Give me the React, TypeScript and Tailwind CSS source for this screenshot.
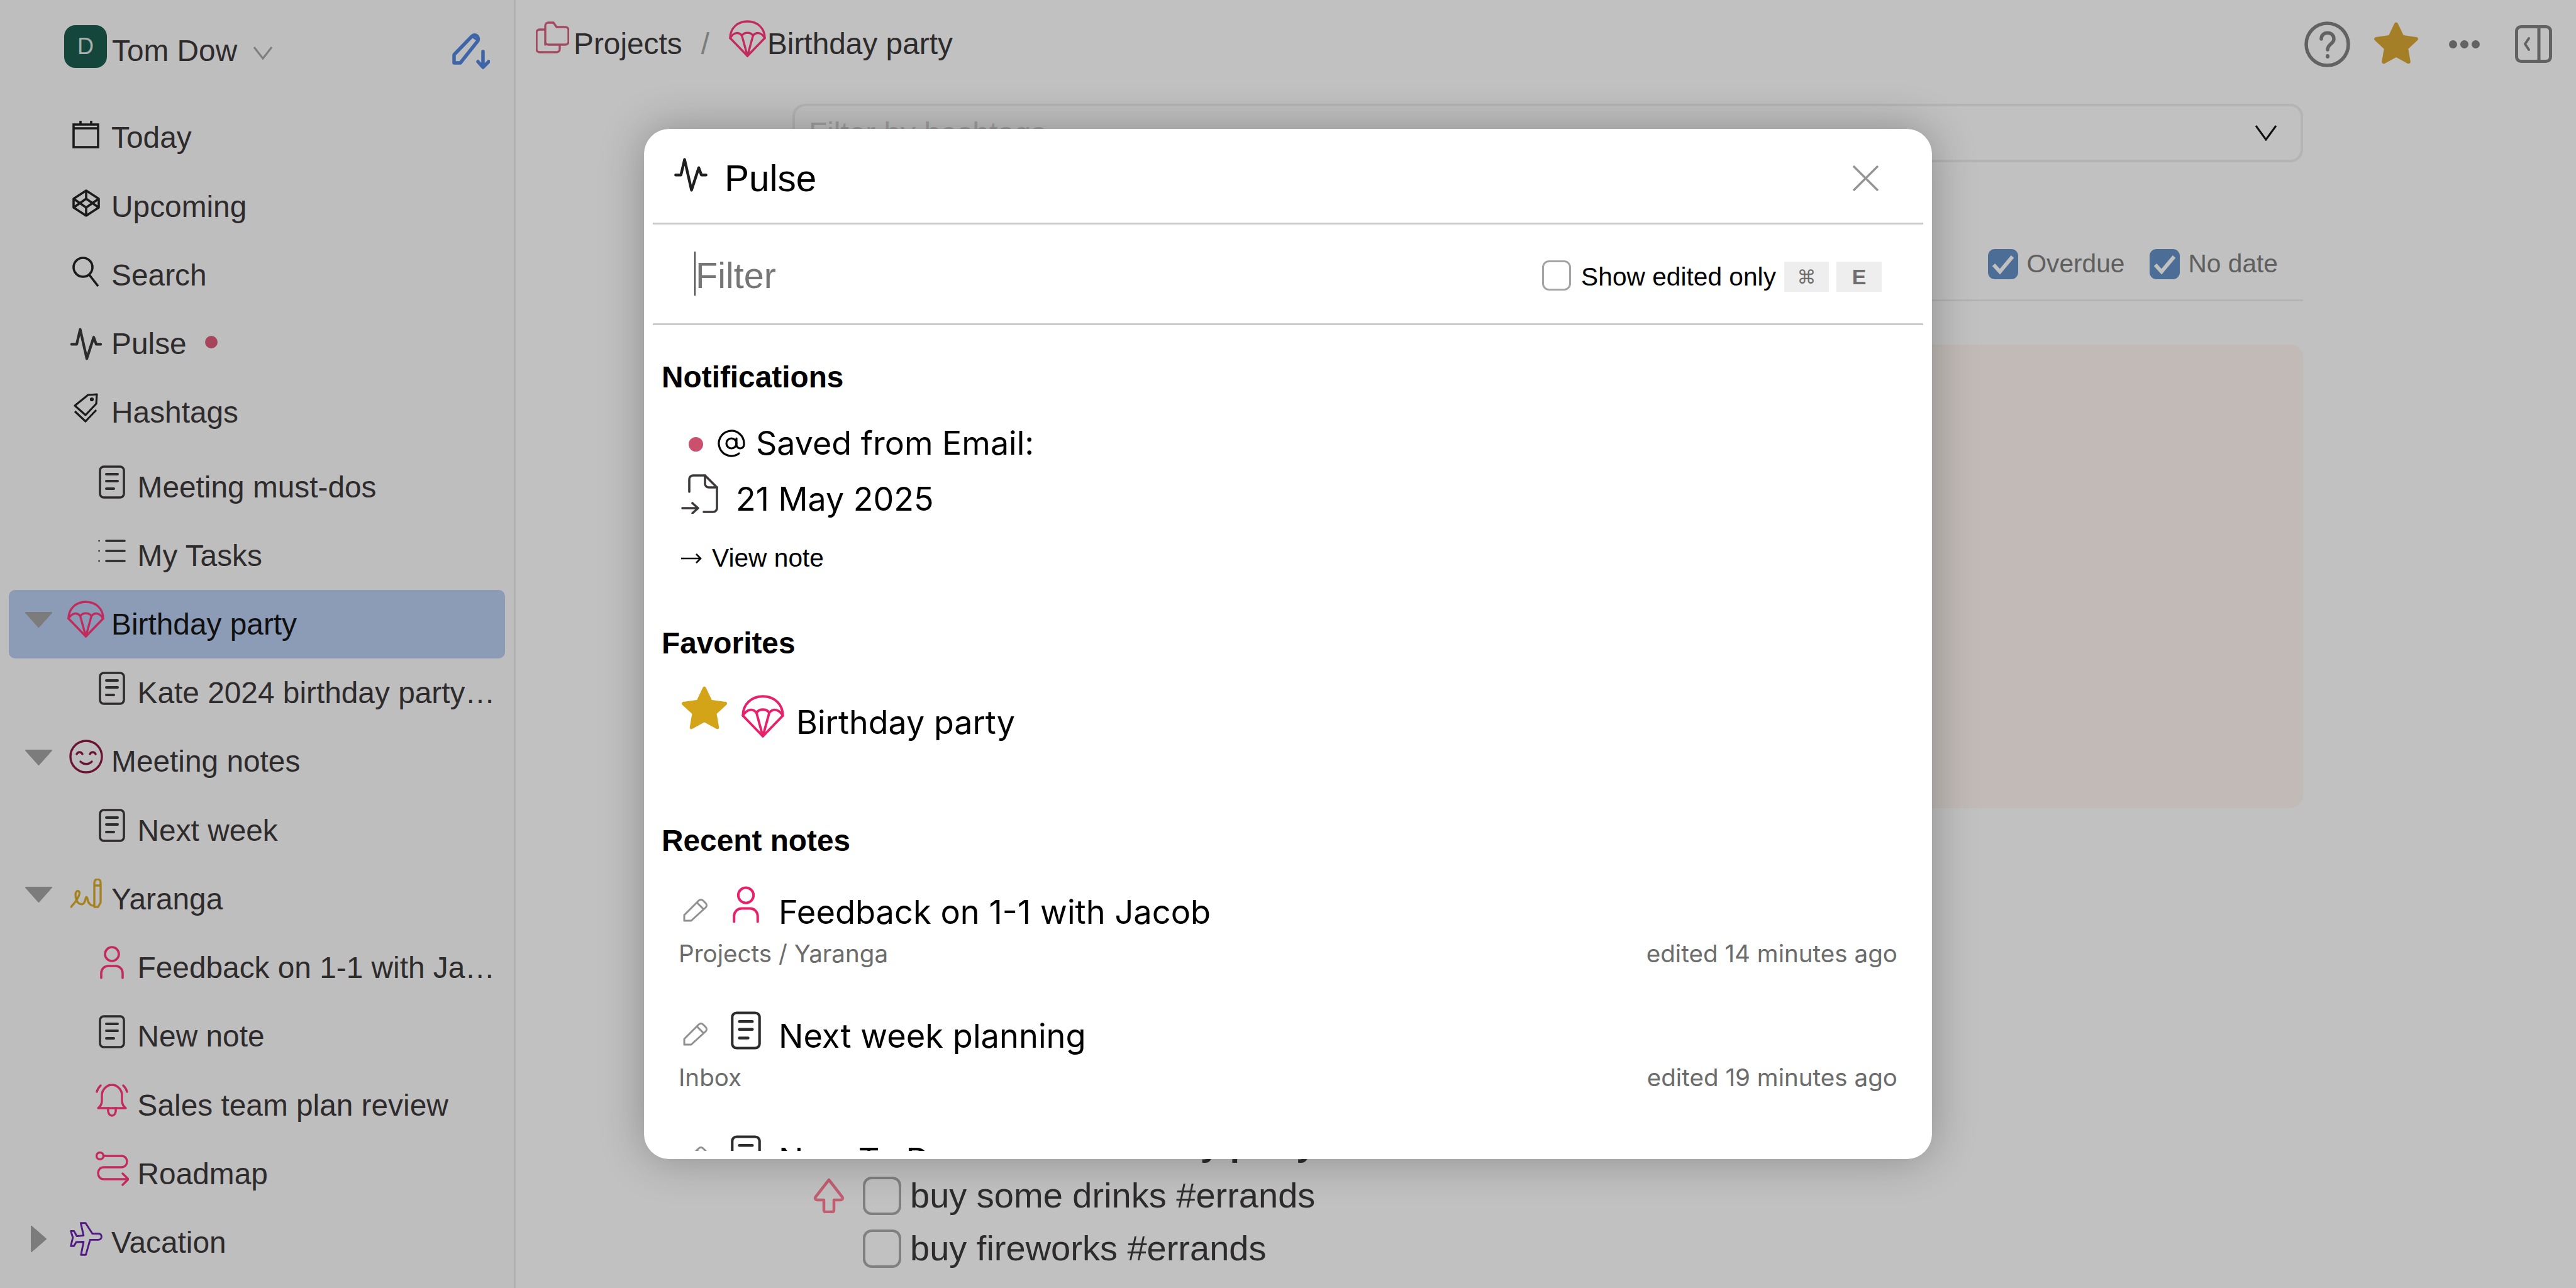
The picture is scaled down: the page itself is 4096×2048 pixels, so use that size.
import { AtSign, Codepen } from "lucide-react";
import type { ReactNode } from "react";

function DocIcon({ className = "" }: { className?: string }) {
  return (
    <svg viewBox="0 0 42 53" className={className} fill="none" stroke="currentColor" strokeWidth="3.6" strokeLinecap="round">
      <rect x="2" y="2" width="38" height="49" rx="6" />
      <path d="M12 14h18M12 25h18M12 37h12" strokeWidth="4" />
    </svg>
  );
}

function Parachute({ className = "" }: { className?: string }) {
  return (
    <svg viewBox="0 0 60 60" className={className} fill="none" stroke="currentColor" strokeWidth="3.4" strokeLinejoin="round" strokeLinecap="round">
      <path d="M2 29C2 13 14 2 30 2s28 11 28 27L30 58Z" />
      <path d="M2 29c6-10 14-10 19-4 4-6 14-6 18 0 5-6 13-6 19 4" />
      <path d="M21 25l9 33 9-33" />
    </svg>
  );
}

function PersonIcon({ className = "" }: { className?: string }) {
  return (
    <svg viewBox="0 0 38 53" className={className} fill="none" stroke="currentColor" strokeWidth="3.6" strokeLinecap="round">
      <circle cx="19" cy="13" r="11" />
      <path d="M2 51v-8a11 11 0 0 1 11-11h12a11 11 0 0 1 11 11v8" />
    </svg>
  );
}

function SmileIcon({ className = "" }: { className?: string }) {
  return (
    <svg viewBox="0 0 54 54" className={className} fill="none" stroke="currentColor" strokeWidth="3.4" strokeLinecap="round">
      <circle cx="27" cy="27" r="25" />
      <path d="M12 23c2-4 7-4 9 0M33 23c2-4 7-4 9 0M18 35c5 5 13 5 18 0" />
    </svg>
  );
}

function SignatureIcon({ className = "" }: { className?: string }) {
  return (
    <svg viewBox="0 0 50 47" className={className} fill="none" stroke="currentColor" strokeWidth="3.4" strokeLinecap="round" strokeLinejoin="round">
      <path d="M38 41V6a5 5 0 0 1 10 0v32l-4 7h-6M38 11h10" />
      <path d="M1 45c8-8 15-20 13-24-3-4-8 1-5 11 2 9 11 12 14 4 1-4 2-10 4-4 1 8 6 12 11 11" />
    </svg>
  );
}

function BellIcon({ className = "" }: { className?: string }) {
  return (
    <svg viewBox="0 0 52 53" className={className} fill="none" stroke="currentColor" strokeWidth="3.4" strokeLinecap="round" strokeLinejoin="round">
      <path d="M4 39c4-3 6-6 6-12V19C10 9 18 2 26 2s16 7 16 17v8c0 6 2 9 6 12Z" />
      <path d="M20 39c-2 16 14 16 12 0" />
      <path d="M2 13c1-4 3-7 6-10M50 13c-1-4-3-7-6-10" />
    </svg>
  );
}

function RouteIcon({ className = "" }: { className?: string }) {
  return (
    <svg viewBox="0 0 53 55" className={className} fill="none" stroke="currentColor" strokeWidth="3.4" strokeLinecap="round" strokeLinejoin="round">
      <circle cx="7" cy="7" r="5.5" />
      <path d="M13 7h28c12 0 12 18 0 18H13c-12 0-12 19 0 19h38" />
      <path d="M43 35l9 9-9 9" />
    </svg>
  );
}

function PlaneIcon({ className = "" }: { className?: string }) {
  return (
    <svg viewBox="0 0 112 120" className={className} fill="none" stroke="currentColor" strokeWidth="6.5" strokeLinejoin="round">
      <path d="M38 4h17l24 37h21c15 0 15 22 0 22H71l-15 53H39l9-46-26 1-8 14H3l7-30L3 32h11l10 18 24-2Z" />
    </svg>
  );
}

function PulseIcon({ className = "" }: { className?: string }) {
  return (
    <svg viewBox="0 0 100 103" className={className} fill="none" stroke="currentColor" strokeWidth="8.5" strokeLinecap="round" strokeLinejoin="round">
      <path d="M4 52h16L31 5l21 93 22-68 8 22h14" />
    </svg>
  );
}

function Triangle({ open }: { open: boolean }) {
  if (open) {
    return (
      <svg viewBox="0 0 43 25" className="mb-[14px] h-[25px] w-[43px]" fill="#a4a4a4" stroke="#a4a4a4" strokeWidth="2" strokeLinejoin="round">
        <path d="M1 1h41L21.5 24Z" />
      </svg>
    );
  }
  return (
    <svg viewBox="0 0 25 42" className="mb-[12px] ml-[9px] h-[42px] w-[25px]" fill="#a4a4a4" stroke="#a4a4a4" strokeWidth="2" strokeLinejoin="round">
      <path d="M1 1v40l23-20Z" />
    </svg>
  );
}

type RowProps = {
  icon: ReactNode;
  label: string;
  child?: boolean;
  open?: boolean;
  selected?: boolean;
  extra?: ReactNode;
};

function Row({ icon, label, child, open, selected, extra }: RowProps) {
  return (
    <div className={`mx-[13.6px] flex h-[109.23px] items-center rounded-[10px] ${selected ? "bg-[#b9cdf1] text-[#161616]" : "text-[#3d393b]"}`}>
      <div className="flex w-[93px] shrink-0 pl-[26px]">{open !== undefined && <Triangle open={open} />}</div>
      {child && <div className="w-[41.5px] shrink-0" />}
      <div className="flex w-[60px] shrink-0 justify-center">{icon}</div>
      <span className="ml-[10.5px] min-w-0 truncate pr-[12px]">{label}</span>
      {extra}
    </div>
  );
}

function Sidebar() {
  const doc = <DocIcon className="mb-[16px] h-[53px] w-[42px] text-[#3d393b]" />;
  return (
    <aside className="flex h-full w-[820px] shrink-0 flex-col border-r-[3px] border-[#ececec] bg-[#fbfbfb] text-[47.8px]">
      <div className="mt-[26px] flex h-[110px] items-center pl-[102px] pr-[38px]">
        <div className="mb-[14px] flex h-[68px] w-[68px] shrink-0 items-center justify-center rounded-[18px] bg-[#1c5d4f] text-[36px] text-[#dfe8e5]">D</div>
        <span className="ml-[8px] text-[#3d393b]">Tom Dow</span>
        <svg viewBox="0 0 30 21" className="ml-[26px] mt-[6px] h-[21px] w-[30px]" fill="none" stroke="#a6a6a6" strokeWidth="3">
          <path d="M1 1l14 18L29 1" />
        </svg>
        <svg viewBox="0 0 60 58" className="ml-auto h-[58px] w-[60px]" fill="none" stroke="#5486e0" strokeWidth="5.5" strokeLinecap="round" strokeLinejoin="round">
          <path d="M3 48V35L31 6c5-6 14 1 9 8L13 48Z" />
          <path d="M32 6l10 7" strokeWidth="3.5" />
          <path d="M49 30v24M41 46l8 9 9-9" />
        </svg>
      </div>
      <div className="mt-[28.7px]">
        <Row label="Today" icon={
          <svg viewBox="0 0 43 44" className="mb-[10px] h-[44px] w-[43px]" fill="none" stroke="#232323" strokeWidth="3.6">
            <rect x="2" y="6" width="39" height="36" />
            <path d="M2 12h39M13 0v7M30 0v7" />
          </svg>
        } />
        <Row label="Upcoming" icon={<Codepen className="mb-[12px] h-[48px] w-[48px] text-[#232323]" strokeWidth={1.8} strokeLinecap="butt" />} />
        <Row label="Search" icon={
          <svg viewBox="0 0 43 48" className="mb-[12px] h-[48px] w-[43px]" fill="none" stroke="#232323" strokeWidth="3.6">
            <circle cx="17" cy="17" r="15" />
            <path d="M27 29l14 18" />
          </svg>
        } />
        <Row label="Pulse" icon={<PulseIcon className="h-[52px] w-[50px] text-[#3a3a3a]" />}
          extra={<span className="mb-[6px] ml-[17px] h-[20px] w-[20px] shrink-0 rounded-full bg-[#dc5c7a]" />} />
        <Row label="Hashtags" icon={
          <svg viewBox="0 0 41 47" className="mb-[16px] h-[47px] w-[41px]" fill="none" stroke="#232323" strokeWidth="3.2" strokeLinejoin="round">
            <path d="M24 3l14-1-1 15-17 18L3 20Z" />
            <circle cx="30" cy="10" r="1.5" fill="#232323" />
            <path d="M3 29l17 16 17-18" />
          </svg>
        } />
      </div>
      <div className="mt-[9px]">
        <Row child label="Meeting must-dos" icon={doc} />
        <Row child label="My Tasks" icon={
          <svg viewBox="0 0 44 38" className="mb-[16px] h-[38px] w-[44px]" fill="none" stroke="#3d393b" strokeWidth="3.6" strokeLinecap="round">
            <path d="M13 3h29M13 19h29M13 35h29" />
            <path d="M1.5 3h.1M1.5 19h.1M1.5 35h.1" strokeWidth="2.6" />
          </svg>
        } />
        <Row selected open label="Birthday party" icon={<Parachute className="mb-[17px] h-[59px] w-[59px] text-[#ff3878]" />} />
        <Row child label="Kate 2024 birthday party planning" icon={doc} />
        <Row open label="Meeting notes" icon={<SmileIcon className="mb-[16px] h-[54px] w-[54px] text-[#8a1a44]" />} />
        <Row child label="Next week" icon={doc} />
        <Row open label="Yaranga" icon={<SignatureIcon className="mb-[18px] h-[47px] w-[50px] text-[#dbac2c]" />} />
        <Row child label="Feedback on 1-1 with Jacob" icon={<PersonIcon className="mb-[16px] h-[53px] w-[38px] text-[#ff3878]" />} />
        <Row child label="New note" icon={doc} />
        <Row child label="Sales team plan review" icon={<BellIcon className="mb-[16px] h-[53px] w-[52px] text-[#ff3878]" />} />
        <Row child label="Roadmap" icon={<RouteIcon className="mb-[16px] h-[55px] w-[53px] text-[#ff3878]" />} />
        <Row open={false} label="Vacation" icon={<PlaneIcon className="mb-[12px] h-[54px] w-[59px] text-[#6a1fb0]" />} />
      </div>
    </aside>
  );
}

function CheckedBox({ label }: { label: string }) {
  return (
    <div className="flex items-center">
      <svg viewBox="0 0 48 48" className="h-[48px] w-[48px]">
        <rect width="48" height="48" rx="11" fill="#6491c6" />
        <path d="M9 25l10 11 20-24" fill="none" stroke="#ffffff" strokeWidth="6" />
      </svg>
      <span className="ml-[13px] text-[40.7px] text-[#7e7e7e]">{label}</span>
    </div>
  );
}

function Main() {
  return (
    <main className="flex min-w-0 flex-1 flex-col">
      <header className="flex h-[140px] items-center pl-[32px] pr-[38px] text-[47.8px] text-[#3d393b]">
        <svg viewBox="0 0 53 52" className="mb-[22px] h-[52px] w-[53px]" fill="none" stroke="#d9627f" strokeWidth="3.4" strokeLinejoin="round">
          <path d="M15 38V8a5 5 0 0 1 5-5h8l5 7h14a5 5 0 0 1 5 5v18a5 5 0 0 1-5 5H20a5 5 0 0 1-5-5Z" />
          <path d="M15 14H6a5 5 0 0 0-5 5v26a5 5 0 0 0 5 5h27a5 5 0 0 0 5-5v-6" />
        </svg>
        <span className="ml-[7px]">Projects</span>
        <span className="ml-[30px] text-[#a4a4a4]">/</span>
        <Parachute className="mb-[18px] ml-[31px] h-[59px] w-[59px] text-[#ff3878]" />
        <span className="ml-[2px]">Birthday party</span>
        <svg viewBox="0 0 73 73" className="ml-auto h-[73px] w-[73px]" fill="none" stroke="#828282" strokeWidth="5.5" strokeLinecap="round">
          <circle cx="36.5" cy="36.5" r="33.5" />
          <path d="M27 28c0-13 20-13 20 0 0 8-10 8-10 17" />
          <path d="M37 55v1" strokeWidth="6" />
        </svg>
        <svg viewBox="0 0 24 24" className="ml-[35px] mb-[2px] h-[76px] w-[76px]" fill="#dba836" stroke="#dba836" strokeWidth="2" strokeLinejoin="round">
          <polygon points="12 2.5 15 8.8 22 9.8 17 14.4 18.2 21.2 12 17.8 5.8 21.2 7 14.4 2 9.8 9 8.8" />
        </svg>
        <div className="ml-[46px] flex w-[49px] justify-between">
          <span className="h-[13px] w-[13px] rounded-full bg-[#828282]" />
          <span className="h-[13px] w-[13px] rounded-full bg-[#828282]" />
          <span className="h-[13px] w-[13px] rounded-full bg-[#828282]" />
        </div>
        <svg viewBox="0 0 59 60" className="ml-[56px] h-[60px] w-[59px]" fill="none" stroke="#828282" strokeWidth="5" strokeLinecap="round" strokeLinejoin="round">
          <rect x="2.5" y="2.5" width="54" height="55" rx="7" />
          <path d="M38 3v54" />
          <path d="M22 21l-6 9 6 9" strokeWidth="4" />
        </svg>
      </header>
      <div className="ml-[440px] flex w-[2402px] flex-col">
        <div className="mt-[25px] flex h-[93px] items-center justify-between rounded-[20px] border-[4px] border-[#eeeeee] pl-[22px] pr-[38px] text-[47.8px] text-[#d4d4d4]">
          <span>Filter by hashtags</span>
          <svg viewBox="0 0 34 25" className="h-[25px] w-[34px]" fill="none" stroke="#161616" strokeWidth="3">
            <path d="M1 1l16 22L33 1" />
          </svg>
        </div>
        <div className="mt-[106px] flex h-[115px] items-center justify-end gap-[40px] border-b-[3px] border-[#eeeeee] pr-[40px]">
          <CheckedBox label="Overdue" />
          <CheckedBox label="No date" />
        </div>
        <div className="mt-[69px] h-[737px] rounded-[20px] bg-[#fff6f2]" />
        <div className="mt-[503px] h-[60px] pl-[182px] text-[56px] font-bold leading-[60px] text-[#3d393b]">Kate 2024 birthday party</div>
        <div className="mt-[11px] flex h-[84px] items-center pl-[33px] text-[56px] text-[#3d393b]">
          <svg viewBox="0 0 50 56" className="h-[56px] w-[50px]" fill="none" stroke="#ff7e96" strokeWidth="4.5" strokeLinejoin="round">
            <path d="M25 3L4 30c-2 3 0 5 3 5h10v16c0 2 1 3 3 3h10c2 0 3-1 3-3V35h10c3 0 5-2 3-5Z" />
          </svg>
          <span className="ml-[29px] h-[61px] w-[61px] rounded-[14px] border-[4px] border-[#a9a9a9]" />
          <span className="ml-[14px]">buy some drinks #errands</span>
        </div>
        <div className="flex h-[84px] items-center pl-[112px] text-[56px] text-[#3d393b]">
          <span className="h-[61px] w-[61px] rounded-[14px] border-[4px] border-[#a9a9a9]" />
          <span className="ml-[14px]">buy fireworks #errands</span>
        </div>
      </div>
    </main>
  );
}

function RecentNote({ icon, title, path, edited }: { icon: ReactNode; title: string; path: string; edited: string }) {
  return (
    <div className="mb-[77px]">
      <div className="flex h-[60px] items-center pl-[62px] font-['Inter',sans-serif] text-[52.4px] text-black">
        <svg viewBox="0 0 39 37" className="mb-[8px] h-[37px] w-[39px] shrink-0" fill="none" stroke="#909090" strokeWidth="3" strokeLinejoin="round">
          <path d="M2 35v-9L25 3c2-2 5-2 7 0l4 4c2 2 2 5 0 7L13 35Z" />
          <path d="M22 6l11 11" />
        </svg>
        <div className="ml-[35px] flex w-[52px] shrink-0 justify-center">{icon}</div>
        <span className="mb-[4px] ml-[26px]">{title}</span>
      </div>
      <div className="mt-[10px] flex h-[50px] items-center justify-between pl-[55px] pr-[55px] font-['Inter',sans-serif] text-[38.6px] text-[#6c6c6c]">
        <span>{path}</span>
        <span>{edited}</span>
      </div>
    </div>
  );
}

function PulseModal() {
  return (
    <div className="absolute left-[1024px] top-[204.8px] flex h-[1638.4px] w-[2048px] flex-col rounded-[40px] bg-white pb-[13px] text-black shadow-[0_0_70px_rgba(0,0,0,0.28)]">
      <div className="mx-[14px] flex h-[152px] shrink-0 items-center border-b-[3.4px] border-[#cccccc] pl-[33px] pr-[71px]">
        <PulseIcon className="mb-[2px] h-[54px] w-[55px] text-[#1f1f1f]" />
        <span className="ml-[26px] mt-[10px] text-[58.5px]">Pulse</span>
        <svg viewBox="0 0 41 41" className="ml-auto mt-[8px] h-[41px] w-[41px]" fill="none" stroke="#949494" strokeWidth="3.4">
          <path d="M1 1l39 39M40 1L1 40" />
        </svg>
      </div>
      <div className="mx-[14px] flex h-[160px] shrink-0 items-center border-b-[3.4px] border-[#cccccc] pl-[66px] pr-[66px]">
        <span className="h-[70px] w-[2px] bg-[#444444]" />
        <span className="mt-[6px] text-[57.6px] text-[#767676]">Filter</span>
        <span className="ml-auto mt-[6px] h-[48px] w-[46px] rounded-[11px] border-[3.5px] border-[#a3a3a3]" />
        <span className="ml-[16px] mt-[10px] text-[40.7px]">Show edited only</span>
        <kbd className="ml-[13px] mt-[10px] flex h-[48px] w-[71px] items-center justify-center bg-[#eeeeee] font-['DejaVu_Sans',sans-serif] text-[30px] text-[#6e6e6e]">⌘</kbd>
        <kbd className="ml-[12px] mt-[10px] flex h-[48px] w-[72px] items-center justify-center bg-[#eeeeee] font-['Liberation_Sans',sans-serif] text-[34px] font-bold text-[#6e6e6e]">E</kbd>
      </div>
      <div className="min-h-0 flex-1 overflow-hidden">
        <h2 className="mt-[53px] h-[60px] pl-[28px] text-[47.8px] font-bold leading-[60px]">Notifications</h2>
        <div className="mt-[45px] flex h-[60px] items-center pl-[71px] font-['Inter',sans-serif] text-[52px]">
          <span className="mt-[4px] h-[23px] w-[23px] rounded-full bg-[#cb506e]" />
          <AtSign className="ml-[21px] h-[48px] w-[48px]" strokeWidth={1.6} />
          <span className="ml-[15px]">Saved from Email:</span>
        </div>
        <div className="mt-[29px] flex h-[60px] items-center pl-[59px] font-['Inter',sans-serif] text-[52px]">
          <svg viewBox="0 0 59 63" className="mb-[16px] h-[63px] w-[59px] text-[#3d393b]" fill="none" stroke="currentColor" strokeWidth="3.6" strokeLinecap="round" strokeLinejoin="round">
            <path d="M13 28V8a6 6 0 0 1 6-6h19l19 19v33a6 6 0 0 1-6 6H36" />
            <path d="M38 2v13a6 6 0 0 0 6 6h13" />
            <path d="M2 54h24M18 46l9 8-9 8" />
          </svg>
          <span className="ml-[28px]">21 May 2025</span>
        </div>
        <div className="mt-[39px] flex h-[50px] items-center pl-[59px] text-[40.7px]">
          <svg viewBox="0 0 33 20" className="h-[20px] w-[33px]" fill="none" stroke="#000000" strokeWidth="2.6">
            <path d="M0 10h31M24 3l7 7-7 7" />
          </svg>
          <span className="ml-[16px]">View note</span>
        </div>
        <h2 className="mt-[80px] h-[60px] pl-[28px] text-[47.8px] font-bold leading-[60px]">Favorites</h2>
        <div className="mt-[66px] flex h-[60px] items-center pl-[56px] font-['Inter',sans-serif] text-[52px]">
          <svg viewBox="0 0 24 24" className="mb-[46px] h-[80px] w-[80px] shrink-0" fill="#d4a418" stroke="#d4a418" strokeWidth="1.6" strokeLinejoin="round">
            <polygon points="12 2.5 15 8.8 22 9.8 17 14.4 18.2 21.2 12 17.8 5.8 21.2 7 14.4 2 9.8 9 8.8" />
          </svg>
          <Parachute className="mb-[20px] ml-[19px] h-[68px] w-[68px] shrink-0 text-[#e8206a]" />
          <span className="ml-[19px]">Birthday party</span>
        </div>
        <h2 className="mt-[128px] h-[60px] pl-[28px] text-[47.8px] font-bold leading-[60px]">Recent notes</h2>
        <div className="mt-[55px]">
          <RecentNote title="Feedback on 1-1 with Jacob" path="Projects / Yaranga" edited="edited 14 minutes ago"
            icon={<PersonIcon className="mb-[26px] h-[61px] w-[42px] text-[#e8206a]" />} />
          <RecentNote title="Next week planning" path="Inbox" edited="edited 19 minutes ago"
            icon={<DocIcon className="mb-[21px] h-[61px] w-[48px] text-[#2e2b2c]" />} />
          <RecentNote title="New To Do" path="Projects" edited="edited 1 hour ago"
            icon={<DocIcon className="mb-[21px] h-[61px] w-[48px] text-[#2e2b2c]" />} />
        </div>
      </div>
    </div>
  );
}

export default function App() {
  return (
    <div className="relative flex h-[2048px] w-[4096px] overflow-hidden bg-white font-['Liberation_Sans',sans-serif]">
      <Sidebar />
      <Main />
      <div className="absolute inset-0 bg-black/[0.245]" />
      <PulseModal />
    </div>
  );
}
